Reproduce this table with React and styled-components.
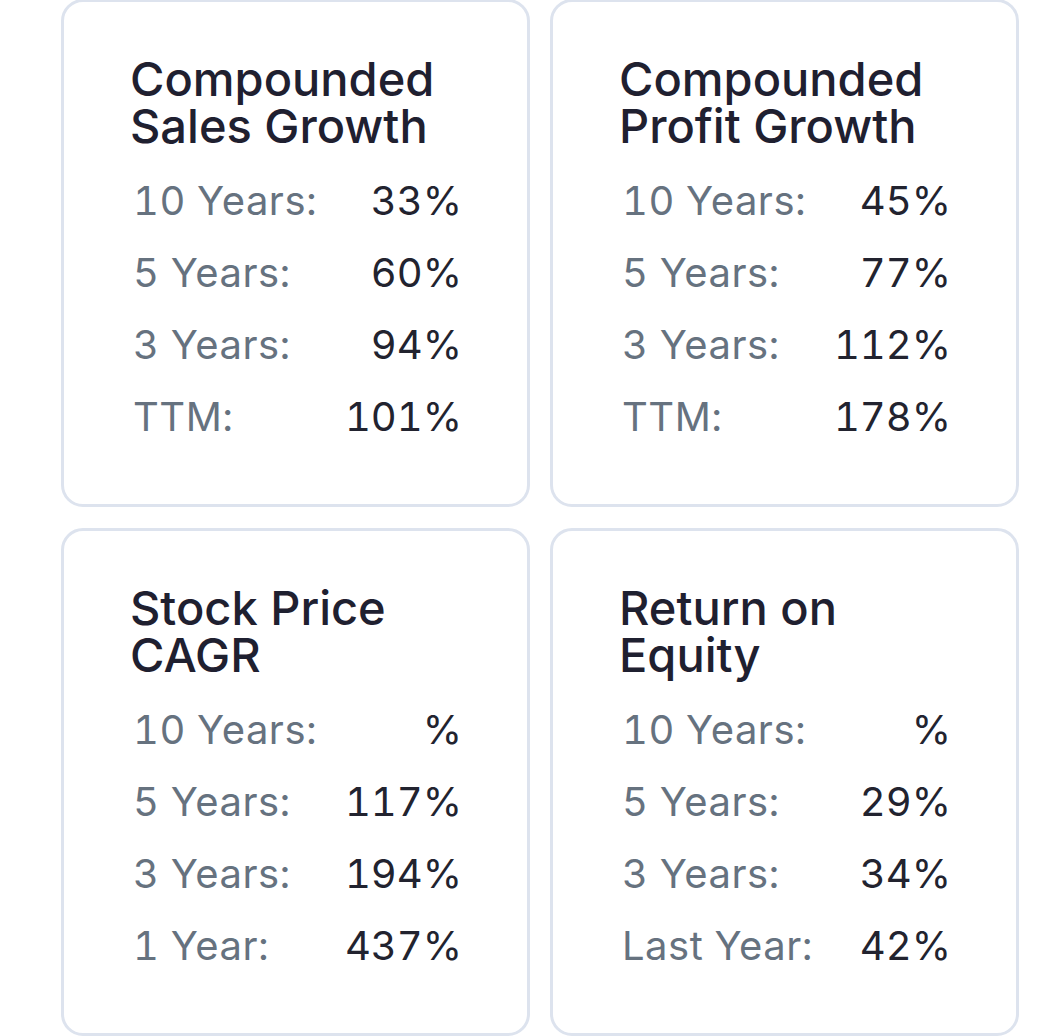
import React from "react";
import styled, { createGlobalStyle } from "styled-components";

const Global = createGlobalStyle`
  html, body { margin: 0; padding: 0; background: #ffffff; }
  body { font-family: Inter, "Noto Sans", sans-serif; -webkit-font-smoothing: antialiased; }
`;

const Grid = styled.div`
  display: grid;
  grid-template-columns: 469px 469px;
  column-gap: 20px;
  row-gap: 21px;
  padding-left: 61px;
  margin-top: -1px;
`;

const Card = styled.section`
  box-sizing: border-box;
  height: 508px;
  border: 3px solid #dde3ee;
  border-radius: 22px;
  background: #ffffff;
  padding: 53px 65px 0 67px;
`;

const Title = styled.h2`
  margin: 0 0 16px -1px;
  font-family: Inter, sans-serif;
  font-weight: 500;
  font-size: 47px;
  line-height: 47px;
  color: #1f2030;
  letter-spacing: 0;
`;

const Row = styled.div`
  display: flex;
  justify-content: space-between;
  align-items: baseline;
  height: 72px;
  line-height: 72px;
  padding-left: 2px;
  font-size: 40px;
  font-variant-numeric: tabular-nums;
`;

const Label = styled.span`
  color: #66727f;
  font-weight: 400;
  letter-spacing: 0.5px;
`;

const Value = styled.span`
  color: #22232f;
  font-weight: 400;
  letter-spacing: 0;
`;

const cards = [
  {
    title: ["Compounded", "Sales Growth"],
    rows: [["10 Years:", "33%"], ["5 Years:", "60%"], ["3 Years:", "94%"], ["TTM:", "101%"]],
  },
  {
    title: ["Compounded", "Profit Growth"],
    rows: [["10 Years:", "45%"], ["5 Years:", "77%"], ["3 Years:", "112%"], ["TTM:", "178%"]],
  },
  {
    title: ["Stock Price", "CAGR"],
    rows: [["10 Years:", "%"], ["5 Years:", "117%"], ["3 Years:", "194%"], ["1 Year:", "437%"]],
  },
  {
    title: ["Return on", "Equity"],
    rows: [["10 Years:", "%"], ["5 Years:", "29%"], ["3 Years:", "34%"], ["Last Year:", "42%"]],
  },
];

export default function App() {
  return (
    <>
      <Global />
      <Grid>
        {cards.map((c) => (
          <Card key={c.title.join(" ")}>
            <Title>
              {c.title[0]}
              <br />
              {c.title[1]}
            </Title>
            {c.rows.map(([l, v]) => (
              <Row key={l}>
                <Label>{l}</Label>
                <Value>{v}</Value>
              </Row>
            ))}
          </Card>
        ))}
      </Grid>
    </>
  );
}
